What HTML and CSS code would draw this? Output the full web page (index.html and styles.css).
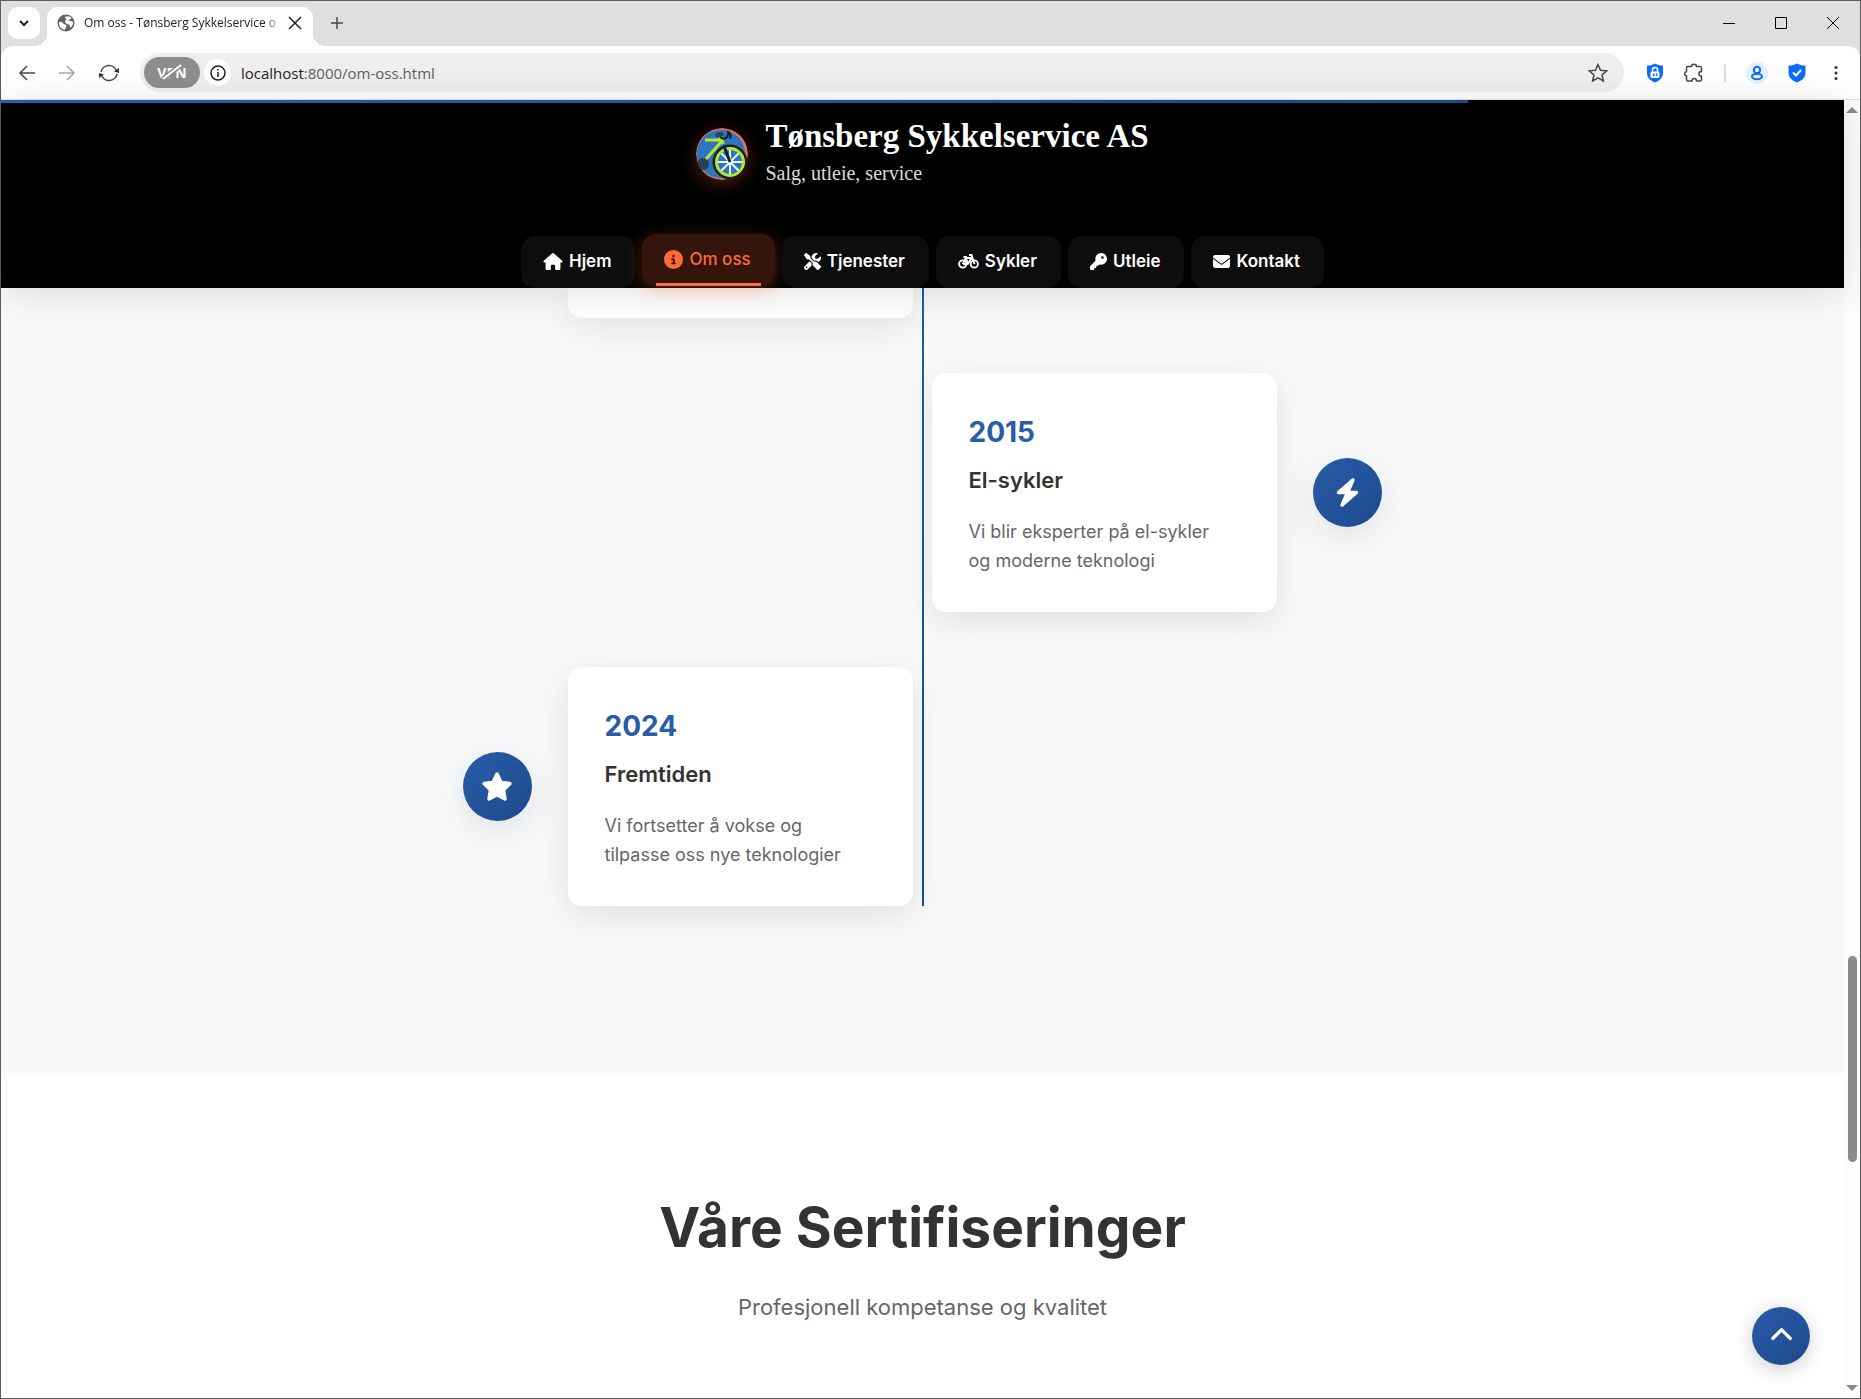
FILE: index.html
```html
<!DOCTYPE html>
<html lang="no">
<head>
<meta charset="utf-8">
<title>Om oss - Tønsberg Sykkelservice</title>
<meta name="viewport" content="width=device-width, initial-scale=1">
<link rel="stylesheet" href="styles.css">
</head>
<body>
<div class="window">
  <div class="tabstrip">
    <button class="tab-search" aria-label="Søk i faner"><svg width="12" height="12" viewBox="0 0 12 12"><path d="M2 4l4 4 4-4" class="line bold"/></svg></button>
    <div class="tab">
      <svg class="globe" width="18" height="18" viewBox="0 0 18 18"><circle cx="9" cy="9" r="8.500" fill="#5f6368"/><path d="M2 8c2-.5 4 .3 4.500 1.800 1 1.200 3 .2 3 2.200 0 1.500-1.500 1.500-1.500 3.800C4 15.500 1.500 12 2 8zM8 3c2-1.500 5-.8 6.500 1-.5 1.500-2.500 1-3 2.500 1 .8 3.500 0 4.500 1.500.2 3-1 4.500-2.500 5.500-1-.5-.5-2.500-1.800-3C9.500 10 7.500 8.500 8 7c.5-1 1.500-.8 1.500-1.800C9 4.500 7.500 4.200 8 3z" fill="#fff"/></svg>
      <span class="tab-title">Om oss - Tønsberg Sykkelservice o</span>
      <button class="plain" aria-label="Lukk fane"><svg width="14" height="14" viewBox="0 0 14 14"><path d="M1 1l12 12M13 1L1 13" class="line"/></svg></button>
    </div>
    <button class="plain new-tab" aria-label="Ny fane"><svg width="14" height="14" viewBox="0 0 14 14"><path d="M7 1v12M1 7h12" class="line soft"/></svg></button>
    <div class="window-controls">
      <button class="plain" aria-label="Minimer"><svg width="14" height="14" viewBox="0 0 14 14"><path d="M1 7.500h12" class="line thin"/></svg></button>
      <button class="plain" aria-label="Maksimer"><svg width="14" height="14" viewBox="0 0 14 14"><path d="M1.500 1.500h11v11h-11z" class="line thin"/></svg></button>
      <button class="plain" aria-label="Lukk"><svg width="14" height="14" viewBox="0 0 14 14"><path d="M1 1l12 12M13 1L1 13" class="line thin"/></svg></button>
    </div>
  </div>

  <div class="toolbar">
    <button class="plain" aria-label="Tilbake"><svg width="18" height="18" viewBox="0 0 18 18"><path d="M17 9H2M9 2L2 9l7 7" class="line soft"/></svg></button>
    <button class="plain faded" aria-label="Frem"><svg width="18" height="18" viewBox="0 0 18 18"><path d="M1 9h15M9 2l7 7-7 7" class="line"/></svg></button>
    <button class="plain" aria-label="Last inn på nytt"><svg width="22" height="20" viewBox="0 0 22 20"><path d="M3 9a8 8 0 0 1 15.500-1M19 11a8 8 0 0 1-15.500 1" class="line soft"/><path d="M21 5v5l-5-1.500zM1 15v-5l5 1.500z" fill="#333"/></svg></button>
    <div class="address">
      <span class="vpn">VPN<svg class="slash" width="24" height="18" viewBox="0 0 24 18"><path d="M3 16L21 2" stroke="#8d8d8d" stroke-width="5"/><path d="M3 16L21 2" stroke="#fff" stroke-width="2"/></svg></span>
      <span class="site-info"><svg width="16" height="16" viewBox="0 0 16 16"><circle cx="8" cy="8" r="7" class="line"/><path d="M8 7v5M8 4v1.500" class="line"/></svg></span>
      <span class="url">localhost<span class="url-path">:8000/om-oss.html</span></span>
      <button class="plain star" aria-label="Bokmerke"><svg width="20" height="20" viewBox="0 0 20 20"><path d="M10 1.500l2.500 5.700 6.200.6-4.700 4.100 1.400 6.100L10 14.800 4.600 18 6 11.900 1.300 7.800l6.200-.6z" class="line soft"/></svg></button>
    </div>
    <div class="extensions">
      <button class="plain" aria-label="Passord"><svg width="18" height="20" viewBox="0 0 18 20"><path d="M9 .5c3 1.700 5.500 2 8 2V10c0 5-4 8-8 9.500C5 18 1 15 1 10V2.500c2.500 0 5-.3 8-2z" fill="#0a6cff"/><path d="M6.500 9V7a2.500 2.500 0 0 1 5 0v2" stroke="#fff" stroke-width="1.500" fill="none"/><rect x="4.500" y="8.500" width="9" height="6.500" rx="1.500" fill="#fff"/><path d="M7 10.500h1.500v2.500H7zM9.800 10.500h1.500v2.500H9.800z" fill="#0a6cff"/></svg></button>
      <button class="plain" aria-label="Utvidelser"><svg width="20" height="20" viewBox="0 0 20 20"><path d="M4 3.500h3.500C7.500 .5 12.500 .5 12.500 3.500H16q1.500 0 1.500 1.500v3.500c-3.500 0-3.500 4.500 0 4.500v3.500q0 1.500-1.500 1.500h-3.500c0-3.500-4.500-3.500-4.500 0H4q-1.500 0-1.500-1.500V13c-2.500-.5-2.500-4 0-4.500V5q0-1.500 1.500-1.500z" class="line soft"/></svg></button>
      <span class="divider"></span>
      <button class="plain profile" aria-label="Profil"><svg width="14" height="16" viewBox="0 0 14 16"><circle cx="7" cy="5" r="3.200" fill="none" stroke="#0a6cff" stroke-width="2"/><ellipse cx="7" cy="11.500" rx="5" ry="2.800" fill="#e3f1ff" stroke="#0a6cff" stroke-width="2"/></svg></button>
      <button class="plain" aria-label="Beskyttelse"><svg width="18" height="20" viewBox="0 0 18 20"><path d="M9 .5c3 1.700 5.500 2 8.500 2V10c0 5-4.500 8-8.500 9.500C5 18 .5 15 .5 10V2.500c3 0 5.500-.3 8.500-2z" fill="#0a6cff"/><path d="M5 9.500l3 3 5-5.500" stroke="#fff" stroke-width="2" fill="none"/></svg></button>
      <button class="plain menu" aria-label="Meny"><svg width="4" height="18" viewBox="0 0 4 18" fill="#333"><circle cx="2" cy="3.500" r="1.500"/><circle cx="2" cy="9" r="1.500"/><circle cx="2" cy="14.500" r="1.500"/></svg></button>
    </div>
  </div>

  <div class="viewport">
    <div class="page">
      <header class="site-header">
        <div class="progress"></div>
        <div class="brand">
          <svg class="logo" width="52" height="52" viewBox="0 0 52 52">
            <circle cx="26" cy="26" r="26" fill="#d9705c"/><circle cx="25" cy="26" r="24" fill="#2f74c0"/>
            <circle cx="7" cy="36" r="6" fill="#2b3f55"/><path d="M19 6q5-4 9 0l-3 4q-6 0-6-4z" fill="#27415f"/>
            <circle cx="34" cy="34" r="16" fill="none" stroke="#14202a" stroke-width="3"/>
            <circle cx="34" cy="34" r="13.500" fill="#2f74c0" stroke="#b6e62e" stroke-width="3"/>
            <path d="M34 22v24M22 34h24M25.500 25.500l17 17M42.500 25.500l-17 17" stroke="#e8f5ff" stroke-width="2"/>
            <path d="M9 12h16M10 31l15-17" stroke="#b6e62e" stroke-width="3" fill="none"/>
            <path d="M24 9l3 7" stroke="#b6e62e" stroke-width="4"/>
            <path d="M28 18l6 16" stroke="#14202a" stroke-width="3"/>
            <path d="M24 9c5 4 9 0 8-5 3 1 3 4 2 7" stroke="#14202a" stroke-width="2" fill="none"/>
          </svg>
          <div>
            <div class="brand-name">Tønsberg Sykkelservice AS</div>
            <div class="brand-tag">Salg, utleie, service</div>
          </div>
        </div>
        <nav class="site-nav">
          <a href="#"><svg width="20" height="17" viewBox="0 0 576 512"><path d="M575.800 255.500c0 18-15 32.100-32 32.100h-32l.7 160.200V472c0 22.100-17.900 40-40 40H392c-22.100 0-40-17.900-40-40V384c0-17.700-14.300-32-32-32H256c-17.700 0-32 14.300-32 32v88c0 22.100-17.900 40-40 40H104c-22.100 0-40-17.900-40-40V287.600H32c-18 0-32-14-32-32.100c0-9 3-17 10-24L266.400 8c7-7 15-8 22-8s15 2 21 7L564.800 231.500c8 7 12 15 11 24z"/></svg>Hjem</a>
          <a href="#" class="active" aria-current="page"><svg width="19" height="19" viewBox="0 0 512 512"><path d="M256 512A256 256 0 1 0 256 0a256 256 0 1 0 0 512zM216 336h24V272H216c-13.300 0-24-10.700-24-24s10.700-24 24-24h48c13.300 0 24 10.700 24 24v88h8c13.300 0 24 10.700 24 24s-10.700 24-24 24H216c-13.300 0-24-10.700-24-24s10.700-24 24-24zm40-208a32 32 0 1 1 0 64 32 32 0 1 1 0-64z"/></svg>Om oss</a>
          <a href="#"><svg width="17" height="17" viewBox="0 0 512 512"><path d="M78.600 5C69.100-2.400 55.600-1.500 47 7L7 47c-8.500 8.500-9.400 22-2.100 31.600l80 104c4.500 5.900 11.600 9.400 19 9.400h54.100l109 109c-14.700 29-10 65.400 14.300 89.600l112 112c12.500 12.500 32.800 12.500 45.300 0l64-64c12.500-12.500 12.500-32.800 0-45.300l-112-112c-24.200-24.200-60.600-29-89.600-14.300l-109-109V104c0-7.500-3.500-14.500-9.400-19L78.600 5zM19.900 396.100C7.200 408.800 0 426.100 0 444.100C0 481.600 30.400 512 67.900 512c18 0 35.300-7.200 48-19.900L233.700 374.300c-7.800-20.900-9-43.600-3.600-65.100l-61.700-61.700L19.900 396.100zM512 144c0-10.500-1.100-20.700-3.200-30.500c-2.400-11.200-16.100-14.100-24.200-6l-63.900 63.900c-3 3-7.100 4.700-11.300 4.700H352c-8.800 0-16-7.200-16-16V102.600c0-4.200 1.700-8.300 4.700-11.300l63.900-63.900c8.100-8.100 5.200-21.800-6-24.200C388.700 1.100 378.500 0 368 0C288.500 0 224 64.500 224 144l0 .8 85.300 85.300c36-9.100 75.800 .5 104 28.700L429 274.500c49-23 83-72.800 83-130.500zM56 432a24 24 0 1 1 48 0 24 24 0 1 1 -48 0z"/></svg>Tjenester</a>
          <a href="#"><svg width="21" height="17" viewBox="0 0 21 17"><g fill="none" stroke="#fff" stroke-width="1.900"><circle cx="4.700" cy="11" r="3.600"/><circle cx="16.300" cy="11" r="3.600"/><path d="M4.700 11l3-6h6l-4 6H5M7.700 5l2.500 6M5.500 4H9M11 2h2.500l3 9"/></g></svg>Sykler</a>
          <a href="#"><svg width="17" height="17" viewBox="0 0 512 512"><path d="M336 352c97.200 0 176-78.800 176-176S433.200 0 336 0S160 78.800 160 176c0 18.700 2.900 36.800 8.300 53.700L7 391c-4.500 4.500-7 10.600-7 17v80c0 13.300 10.700 24 24 24h80c13.300 0 24-10.700 24-24V448h40c13.300 0 24-10.700 24-24V384h40c6.400 0 12.500-2.500 17-7l33.300-33.300c16.900 5.400 35 8.300 53.700 8.300zM376 96a40 40 0 1 1 0 80 40 40 0 1 1 0-80z"/></svg>Utleie</a>
          <a href="#"><svg width="17" height="17" viewBox="0 0 512 512"><path d="M48 64C21.500 64 0 85.500 0 112c0 15.100 7.100 29.300 19.200 38.400L236.800 313.600c11.400 8.500 27 8.500 38.400 0L492.800 150.400c12.100-9.100 19.200-23.300 19.200-38.400c0-26.500-21.500-48-48-48H48zM0 176V384c0 35.300 28.700 64 64 64H448c35.300 0 64-28.700 64-64V176L294.400 339.200c-22.800 17.100-54 17.100-76.800 0L0 176z"/></svg>Kontakt</a>
        </nav>
      </header>

      <main>
        <section class="history">
          <div class="timeline">
            <div class="entry left"><div class="card card-end"></div></div>
            <article class="entry right">
              <div class="card">
                <div class="year">2015</div>
                <h3>El-sykler</h3>
                <p>Vi blir eksperter på el-sykler og moderne teknologi</p>
              </div>
              <span class="marker"><svg width="25" height="29" viewBox="0 0 448 512"><path d="M349.400 44.600c5.900-13.700 1.500-29.700-10.600-38.500s-28.600-8-39.900 1.800l-256 224c-10 8.800-13.600 22.900-8.900 35.300S50.700 288 64 288H175.500L98.600 467.400c-5.900 13.700-1.500 29.700 10.600 38.500s28.600 8 39.900-1.800l256-224c10-8.800 13.600-22.900 8.900-35.300s-16.600-20.700-30-20.700H272.500L349.400 44.600z"/></svg></span>
            </article>
            <article class="entry left">
              <div class="card">
                <div class="year">2024</div>
                <h3>Fremtiden</h3>
                <p>Vi fortsetter å vokse og tilpasse oss nye teknologier</p>
              </div>
              <span class="marker"><svg width="32" height="29" viewBox="0 0 576 512"><path d="M316.900 18C311.600 7 300.400 0 288.100 0s-23.400 7-28.800 18L195 150.300 51.400 171.500c-12 1.800-22 10.200-25.700 21.700s-.7 24.200 7.900 32.700L137.800 329 113.200 474.700c-2 12 3 24.200 12.900 31.300s23 8 33.800 2.300l128.300-68.500 128.300 68.500c10.800 5.700 23.900 4.900 33.800-2.300s14.900-19.300 12.900-31.300L438.500 329 542.700 225.900c8.600-8.500 11.700-21.200 7.900-32.700s-13.700-19.900-25.700-21.700L381.200 150.300 316.900 18z"/></svg></span>
            </article>
          </div>
        </section>
        <section class="certifications">
          <h2>Våre Sertifiseringer</h2>
          <p>Profesjonell kompetanse og kvalitet</p>
        </section>
      </main>
      <button class="to-top" aria-label="Til toppen"><svg width="23" height="23" viewBox="0 0 512 512"><path d="M233.400 105.400c12.500-12.500 32.800-12.500 45.300 0l192 192c12.500 12.500 12.500 32.800 0 45.300s-32.800 12.500-45.300 0L256 173.300 86.600 342.600c-12.500 12.500-32.800 12.500-45.300 0s-12.500-32.800 0-45.300l192-192z"/></svg></button>
    </div>
    <div class="scrollbar">
      <svg width="12" height="6" viewBox="0 0 12 6"><path d="M0 6l6-6 6 6z"/></svg>
      <div class="track"><div class="thumb"></div></div>
      <svg width="12" height="6" viewBox="0 0 12 6"><path d="M0 0h12L6 6z"/></svg>
    </div>
  </div>
</div>
</body>
</html>
```
FILE: styles.css
```css
* { box-sizing: border-box; }
body { margin: 0; font-family: Inter, sans-serif; color: #333; }
h2, h3, p { margin: 0; }
button { font: inherit; cursor: pointer; }
svg { display: block; flex: none; }

.window {
  min-height: 100vh;
  display: flex;
  flex-direction: column;
  border: 1px solid #5c5c5c;
  background: #dfdfdf;
}
.plain { border: 0; padding: 0; background: none; display: flex; align-items: center; justify-content: center; }
.line { fill: none; stroke: #222; stroke-width: 1.5; }
.line.bold { stroke-width: 2; }
.line.thin { stroke: #000; stroke-width: 1; }
.line.soft { stroke: #474747; }
.faded { opacity: .4; }

.tabstrip { display: flex; align-items: flex-end; height: 45px; padding: 0 20px 0 7px; }
.tab-search {
  width: 32px; height: 32px; margin: 0 7px 7px 0; padding: 0;
  border: 0; border-radius: 10px; background: #fff;
  display: flex; align-items: center; justify-content: center;
}
.tab {
  position: relative;
  display: flex; align-items: center;
  width: 266px; height: 39px; padding: 0 11px 7px 10px;
  border-radius: 11px 11px 0 0; background: #fff;
}
.tab::after, .tab::before {
  content: ""; position: absolute; bottom: 0; width: 12px; height: 12px;
}
.tab::after { left: 100%; background: radial-gradient(circle at 100% 0, transparent 12px, #fff 12px); }
.tab::before { right: 100%; background: radial-gradient(circle at 0 0, transparent 12px, #fff 12px); }
.tab-title {
  flex: 1; margin: 0 8px 0 9px; overflow: hidden; white-space: nowrap;
  font: 12px/18px "Open Sans", sans-serif; color: #222;
  -webkit-mask-image: linear-gradient(90deg, #000 180px, transparent 200px);
  mask-image: linear-gradient(90deg, #000 180px, transparent 200px);
}
.new-tab { height: 32px; margin: 0 0 7px 17px; }
.window-controls { display: flex; gap: 38px; height: 44px; margin-left: auto; margin-bottom: 1px; align-items: center; }

.toolbar {
  display: flex; align-items: center; gap: 22px;
  height: 54px; padding: 0 22px 0 17px;
  border-bottom: 1px solid #e3dfe1; border-radius: 12px 12px 0 0; background: #fff;
}
.address {
  flex: 1; display: flex; align-items: center;
  height: 39px; margin-left: -2px; padding: 0 16px 0 4px;
  border-radius: 20px; background: #efedee;
}
.vpn {
  position: relative; display: flex; align-items: center; justify-content: center;
  width: 56px; height: 31px; border-radius: 16px; background: #8d8d8d;
  color: #fff; font: bold 14px/18px "Open Sans", sans-serif;
}
.slash { position: absolute; left: 16px; top: 6px; }
.site-info { display: flex; align-items: center; justify-content: center; width: 27px; height: 27px; margin: 0 10px 0 4px; border-radius: 50%; background: #fff; }
.url { font: 15px/24px "Open Sans", sans-serif; color: #1f1f1f; }
.url-path { color: #5f5f5f; }
.star { margin-left: auto; }
.extensions { display: flex; align-items: center; gap: 20px; }
.divider { width: 2px; height: 18px; background: #dedede; }
.profile { width: 22px; height: 22px; border-radius: 50%; background: #e3f1ff; }
.menu { margin-left: 8px; }

.viewport { flex: 1; display: flex; background: #fff; }
.page { position: relative; flex: 1; min-width: 0; }

.site-header {
  position: relative; z-index: 2;
  height: 188px; padding-top: 17px;
  display: flex; flex-direction: column; align-items: center; justify-content: space-between;
  background: #000;
  box-shadow: 0 4px 36px rgba(0, 0, 0, .12);
}
.progress {
  position: absolute; left: 0; top: 0; width: 79.6%; height: 3px;
  background: linear-gradient(90deg, #2a5ca8, #1b4a8c);
}
.brand { display: flex; gap: 17px; align-items: center; }
.logo { border-radius: 50%; box-shadow: 0 4px 17px rgba(255, 107, 53, .3); }
.brand-name { font: bold 33px/38px "Liberation Serif", serif; color: #fff; }
.brand-tag { font: 20px/36px "Liberation Serif", serif; color: #dcdcdc; }

.site-nav { display: flex; gap: 7px; }
.site-nav a {
  position: relative;
  display: flex; align-items: center; gap: 6px;
  height: 52px; padding: 0 24px 2px 22px;
  border-radius: 14px; background: #0d0d0d;
  color: #fff; font-size: 17px; font-weight: 600; line-height: 27px; text-decoration: none;
}
.site-nav svg { fill: currentColor; }
.site-nav .active {
  bottom: 2px; background: #33150b; color: #ff6b35; font-weight: 500;
  box-shadow: 0 4px 17px rgba(255, 107, 53, .3);
}
.site-nav .active::after {
  content: ""; position: absolute; left: 14px; right: 14px; bottom: 0; height: 3px; background: #ff6b35;
}

.history { padding-bottom: 167px; background: #f8f9fb; }
.timeline {
  display: flex; flex-direction: column; gap: 55px;
  background: linear-gradient(#2a5ca8, #1b4a8c) center / 2px 100% no-repeat;
}
.entry { display: flex; align-items: center; gap: 36px; width: 50%; }
.left { flex-direction: row-reverse; padding-right: 10px; }
.right { align-self: flex-end; padding-left: 9px; }
.card {
  width: 345px; padding: 37px; border-radius: 14px; background: #fff;
  box-shadow: 0 9px 36px rgba(0, 0, 0, .1);
}
.card-end { height: 30px; padding: 0; border-radius: 0 0 14px 14px; }
.year { font-size: 28px; font-weight: 700; line-height: 44px; color: #2a5ca8; }
.card h3 { margin: 9px 0 19px; font-size: 22px; font-weight: 600; line-height: 35px; }
.card p { max-width: 260px; font-size: 18px; line-height: 29px; color: #666; }
.marker {
  display: flex; align-items: center; justify-content: center;
  width: 69px; height: 69px; border-radius: 50%;
  background: linear-gradient(135deg, #2a5ca8, #1b4a8c);
  box-shadow: 0 9px 36px rgba(0, 0, 0, .1);
}
.marker svg, .to-top svg { fill: #fff; }

.certifications { padding: 121px 24px 48px; text-align: center; }
.certifications h2 { font-size: 55px; font-weight: 700; line-height: 66px; }
.certifications p { margin-top: 30px; font-size: 22px; line-height: 35px; color: #666; }

.to-top {
  position: absolute; right: 34px; bottom: 33px; z-index: 3;
  display: flex; align-items: center; justify-content: center;
  width: 58px; height: 58px; padding: 0 0 2px; border: 0; border-radius: 50%;
  background: linear-gradient(135deg, #2a5ca8, #1b4a8c);
  box-shadow: 0 4px 20px rgba(0, 0, 0, .2);
}
.to-top svg { stroke: #fff; stroke-width: 14; }

.scrollbar { display: flex; flex-direction: column; align-items: center; width: 16px; padding: 7px 0; background: #fcfcfc; }
.scrollbar svg { fill: #8b8b8b; }
.track { flex: 1; display: flex; flex-direction: column; justify-content: flex-end; padding-bottom: 223px; }
.thumb { width: 9px; height: 19.6%; border-radius: 5px; background: #8b8b8b; }
```
